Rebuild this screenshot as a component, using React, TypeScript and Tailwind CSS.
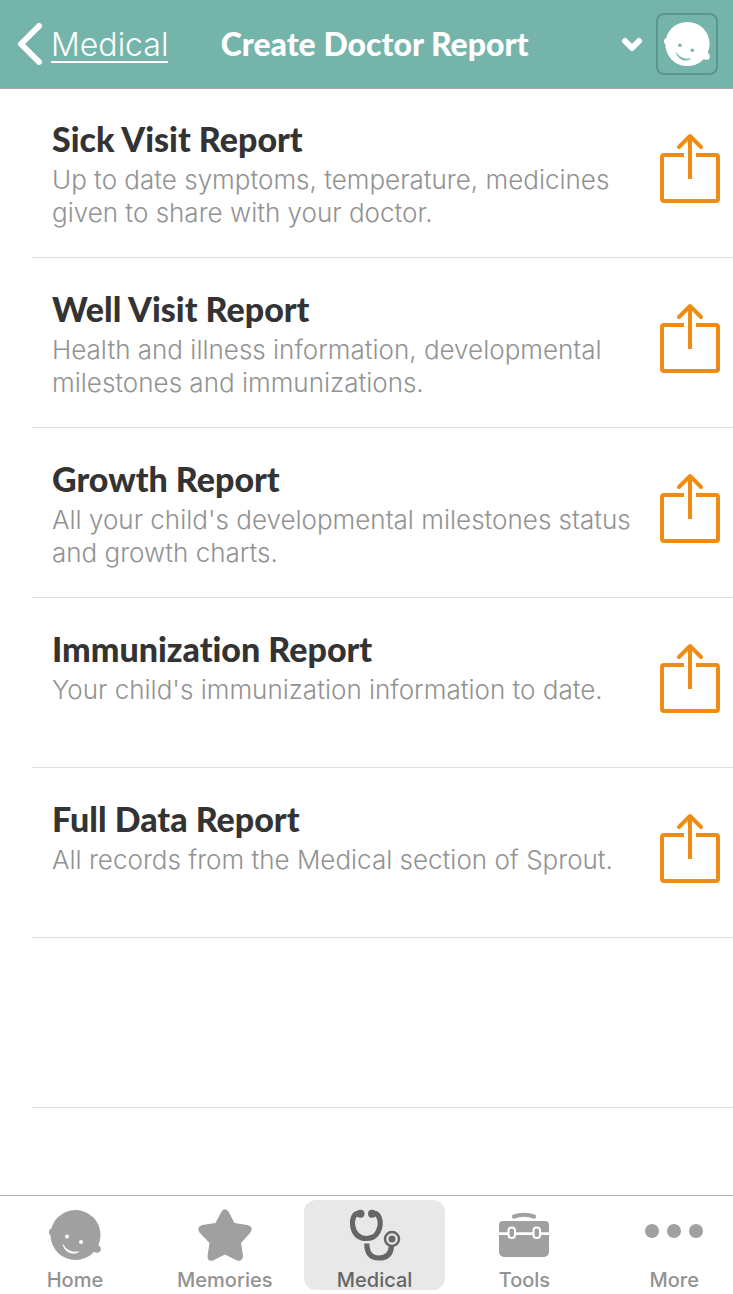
import { clsx } from 'clsx';
import type { ReactNode } from 'react';

const reports = [
  {
    title: 'Sick Visit Report',
    description: 'Up to date symptoms, temperature, medicines given to share with your doctor.',
  },
  {
    title: 'Well Visit Report',
    description: 'Health and illness information, developmental milestones and immunizations.',
  },
  {
    title: 'Growth Report',
    description: "All your child's developmental milestones status and growth charts.",
  },
  {
    title: 'Immunization Report',
    description: "Your child's immunization information to date.",
  },
  {
    title: 'Full Data Report',
    description: 'All records from the Medical section of Sprout.',
  },
];

function BabyFace({ className, faceClass }: { className: string; faceClass: string }) {
  return (
    <svg viewBox="0 0 52 52" className={className} aria-hidden="true">
      <g fill="currentColor">
        <circle cx="26.5" cy="26" r="25" />
        <circle cx="3.8" cy="23" r="3.8" />
        <circle cx="48" cy="40" r="3.8" />
      </g>
      <g className={faceClass}>
        <circle cx="18" cy="27.5" r="2" fill="currentColor" />
        <circle cx="32" cy="33" r="2" fill="currentColor" />
        <path d="M14 35.5C15.7 44 25 46.500 30 42.500C25 44 18 42.500 14 35.500Z" fill="currentColor" stroke="currentColor" strokeWidth="0.6" />
      </g>
    </svg>
  );
}

function ShareIcon() {
  return (
    <svg viewBox="0 0 60 70" className="h-[70px] w-[60px]" fill="none" stroke="currentColor" strokeWidth="4" aria-hidden="true">
      <path d="M24 22H4a2 2 0 0 0-2 2V66a2 2 0 0 0 2 2H56a2 2 0 0 0 2-2V24a2 2 0 0 0-2-2H36" />
      <path d="M30 46V3" />
      <path d="M19 14L30 3L41 14" strokeLinecap="round" strokeLinejoin="round" />
    </svg>
  );
}

function StarIcon() {
  return (
    <svg viewBox="0 0 56 52" className="h-[52px] w-[56px]" fill="currentColor" aria-hidden="true">
      <path d="M24.500 2.500Q28 -2 31.500 2.500L37.500 14L50.500 16Q57 18 53.500 23.500L44 34L46 47Q45.500 53 40 51.500L28 45.500L16 51.500Q10.500 53 10.500 47L12.500 34L2.500 23.500Q-1 18 5.500 16L18.500 14Z" />
    </svg>
  );
}

function StethoscopeIcon() {
  return (
    <svg viewBox="0 0 52 54" className="h-[54px] w-[52px]" fill="none" stroke="currentColor" aria-hidden="true">
      <path d="M10.500 5.500C4.500 5 2.700 12 3.700 18C5 25 8.500 30.500 17.500 30.500C26.500 30.500 29.500 25 31 18C32 12 30 5 24 5.500" strokeWidth="5.2" />
      <circle cx="11.5" cy="5.7" r="4" fill="currentColor" stroke="none" />
      <circle cx="23" cy="5.7" r="4" fill="currentColor" stroke="none" />
      <path d="M17.800 35.500C17.800 45 21.500 50 30 50C38.500 50 42 45 42.500 38" strokeWidth="5.2" />
      <circle cx="43" cy="31" r="7" strokeWidth="2.5" className="fill-[#e8e8e8]" />
      <circle cx="43" cy="31" r="3.5" fill="currentColor" stroke="none" />
    </svg>
  );
}

function ToolboxIcon() {
  return (
    <svg viewBox="0 0 52 46" className="h-[46px] w-[52px]" aria-hidden="true">
      <path d="M16 4.500Q26 1 36 4.500" fill="none" stroke="currentColor" strokeWidth="4.2" strokeLinecap="round" />
      <path d="M5 9H47a4 4 0 0 1 4 4V21H1V13a4 4 0 0 1 4-4Z" fill="currentColor" />
      <path d="M1 23H51V40a5 5 0 0 1-5 5H6a5 5 0 0 1-5-5Z" fill="currentColor" />
      <path d="M0 21.500H52" stroke="white" strokeWidth="2.6" />
      <rect x="10.5" y="15.5" width="6.5" height="10.5" rx="3" fill="currentColor" stroke="white" strokeWidth="2" />
      <rect x="35.5" y="15.5" width="6.5" height="10.5" rx="3" fill="currentColor" stroke="white" strokeWidth="2" />
    </svg>
  );
}

function MoreIcon() {
  return (
    <svg viewBox="0 0 58 22" className="h-[22px] w-[58px]" fill="currentColor" aria-hidden="true">
      <circle cx="7" cy="7" r="7" />
      <circle cx="29" cy="7" r="7" />
      <circle cx="51" cy="7" r="7" />
    </svg>
  );
}

const tabs: { label: string; icon: ReactNode; active?: boolean }[] = [
  { label: 'Home', icon: <BabyFace className="size-[52px]" faceClass="text-white" /> },
  { label: 'Memories', icon: <StarIcon /> },
  { label: 'Medical', icon: <StethoscopeIcon />, active: true },
  { label: 'Tools', icon: <ToolboxIcon /> },
  { label: 'More', icon: <MoreIcon /> },
];

function Header() {
  return (
    <header className="flex h-[89px] items-center border-b border-[#a0aaa5] bg-[#75b4aa] pr-[15px] pl-[17px] text-white">
      <a href="#medical" className="flex items-center gap-2 text-[32px] font-light">
        <svg viewBox="0 0 26 44" className="h-[44px] w-[26px]" fill="none" stroke="currentColor" strokeWidth="6" strokeLinecap="round" strokeLinejoin="round" aria-hidden="true">
          <path d="M22 4L4 22L22 40" />
        </svg>
        <span className="border-b-2 border-white pt-1 leading-8">Medical</span>
      </a>
      <h1 className="flex-1 pr-10 text-center font-['Lato',sans-serif] text-[32px] leading-10 font-black whitespace-nowrap">
        Create Doctor Report
      </h1>
      <button type="button" aria-label="Choose child" className="flex items-center gap-[13px]">
        <svg viewBox="0 0 22 16" className="h-[16px] w-[22px]" fill="none" stroke="currentColor" strokeWidth="6" strokeLinecap="round" strokeLinejoin="round" aria-hidden="true">
          <path d="M4 5L11 12L18 5" />
        </svg>
        <span className="flex size-[62px] items-center justify-center rounded-lg border-2 border-[#5b968e]">
          <BabyFace className="size-[46px]" faceClass="text-[#75b4aa]" />
        </span>
      </button>
    </header>
  );
}

export default function App() {
  return (
    <div className="flex min-h-screen flex-col overflow-x-hidden bg-white font-['Inter',sans-serif]">
      <Header />

      <main className="-mt-px flex-1">
        <ul className="pl-8">
          {reports.map((report) => (
            <li key={report.title} className="flex min-h-[170px] items-start border-b border-[#dedede] pr-[13px] pl-5">
              <div className="min-w-0 flex-1 pt-[31px] pr-2">
                <h2 className="font-['Lato',sans-serif] text-[34px] leading-10 font-black text-[#333] [font-variant-ligatures:none]">
                  {report.title}
                </h2>
                <p className="mt-1 text-[26px] leading-[33px] font-light text-[#929292]">{report.description}</p>
              </div>
              <button type="button" aria-label={`Share ${report.title}`} className="mt-[45px] text-[#f08c14]">
                <ShareIcon />
              </button>
            </li>
          ))}
          <li className="h-[170px] border-b border-[#dedede]" />
        </ul>
      </main>

      <nav className="border-t border-[#b2b2b2] pt-1 pb-1">
        {/* five equal tabs, the last one runs slightly past the edge */}
        <div className="flex w-[102.2%]">
          {tabs.map((tab) => (
            <div key={tab.label} className="flex-1 px-1">
              <a
                href={`#${tab.label.toLowerCase()}`}
                className={clsx(
                  'flex h-[90px] flex-col items-center rounded-xl',
                  tab.active ? 'bg-[#e8e8e8] text-[#666]' : 'text-[#a0a0a0]'
                )}
              >
                <span className="flex h-[70px] items-center">{tab.icon}</span>
                <span className={clsx('text-[20px] leading-5 font-medium', tab.active ? 'text-[#666]' : 'text-[#929292]')}>
                  {tab.label}
                </span>
              </a>
            </div>
          ))}
        </div>
      </nav>
    </div>
  );
}
